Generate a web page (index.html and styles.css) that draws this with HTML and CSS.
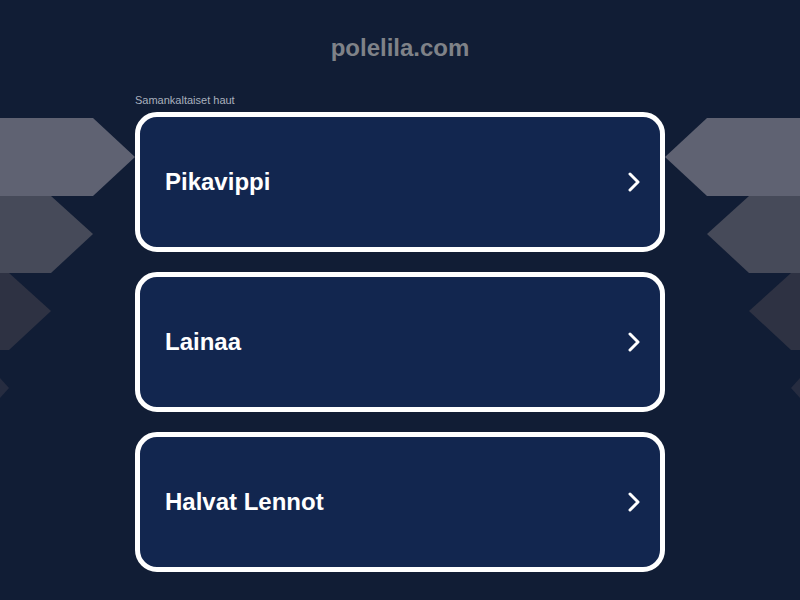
FILE: index.html
```html
<!DOCTYPE html>
<html lang="fi">
<head>
<meta charset="utf-8">
<title>polelila.com</title>
<link rel="stylesheet" href="styles.css">
</head>
<body>
<svg class="deco deco-left" width="135" height="310" viewBox="0 0 135 310" aria-hidden="true">
  <polygon class="s1" points="0,0 93,0 135,39 93,78 0,78"/>
  <polygon class="s2" points="0,78 51,78 93,116 51,155 0,155"/>
  <polygon class="s3" points="0,155 9,155 51,193 9,232 0,232"/>
  <polygon class="s4" points="0,260 9,270 0,280"/>
</svg>
<svg class="deco deco-right" width="135" height="310" viewBox="0 0 135 310" aria-hidden="true">
  <polygon class="s1" points="0,0 93,0 135,39 93,78 0,78"/>
  <polygon class="s2" points="0,78 51,78 93,116 51,155 0,155"/>
  <polygon class="s3" points="0,155 9,155 51,193 9,232 0,232"/>
  <polygon class="s4" points="0,260 9,270 0,280"/>
</svg>
<header class="header">
  <h1 class="domain">polelila.com</h1>
</header>
<main class="main">
  <div class="label">Samankaltaiset haut</div>
  <ul class="links">
    <li><a class="card" href="#"><span class="card-text">Pikavippi</span><svg class="chev" width="14" height="20" viewBox="0 0 14 20"><path d="M3 2 L11 10 L3 18" fill="none" stroke="#fff" stroke-width="3" stroke-linecap="round" stroke-linejoin="round"/></svg></a></li>
    <li><a class="card" href="#"><span class="card-text">Lainaa</span><svg class="chev" width="14" height="20" viewBox="0 0 14 20"><path d="M3 2 L11 10 L3 18" fill="none" stroke="#fff" stroke-width="3" stroke-linecap="round" stroke-linejoin="round"/></svg></a></li>
    <li><a class="card" href="#"><span class="card-text">Halvat Lennot</span><svg class="chev" width="14" height="20" viewBox="0 0 14 20"><path d="M3 2 L11 10 L3 18" fill="none" stroke="#fff" stroke-width="3" stroke-linecap="round" stroke-linejoin="round"/></svg></a></li>
  </ul>
</main>
</body>
</html>
```
FILE: styles.css
```css
html, body {
  margin: 0;
  padding: 0;
}
body {
  background: #111d35;
  font-family: "Liberation Sans", Arial, sans-serif;
  min-height: 600px;
  position: relative;
  overflow: hidden;
}
.deco {
  position: absolute;
  top: 118px;
  display: block;
}
.deco-left { left: 0; }
.deco-right { right: 0; transform: scaleX(-1); }
.s1 { fill: #5f6272; }
.s2 { fill: #464a59; }
.s3 { fill: #2e3243; }
.s4 { fill: #262c40; }

.header {
  padding-top: 34px;
  text-align: center;
}
.domain {
  margin: 0;
  font-size: 24px;
  line-height: 28px;
  font-weight: bold;
  color: #7f8288;
}
.main {
  position: relative;
  width: 530px;
  margin: 32px auto 0;
}
.label {
  font-size: 11px;
  line-height: 13px;
  color: #a9b0bd;
  margin-bottom: 5px;
}
.links {
  list-style: none;
  margin: 0;
  padding: 0;
  display: flex;
  flex-direction: column;
  gap: 20px;
}
.card {
  box-sizing: border-box;
  height: 140px;
  display: flex;
  align-items: center;
  justify-content: space-between;
  padding: 0 19px 0 25px;
  border: 5px solid #ffffff;
  border-radius: 22px;
  background: #12264f;
  text-decoration: none;
}
.card-text {
  color: #ffffff;
  font-size: 24px;
  font-weight: bold;
}
.chev {
  display: block;
}
```
